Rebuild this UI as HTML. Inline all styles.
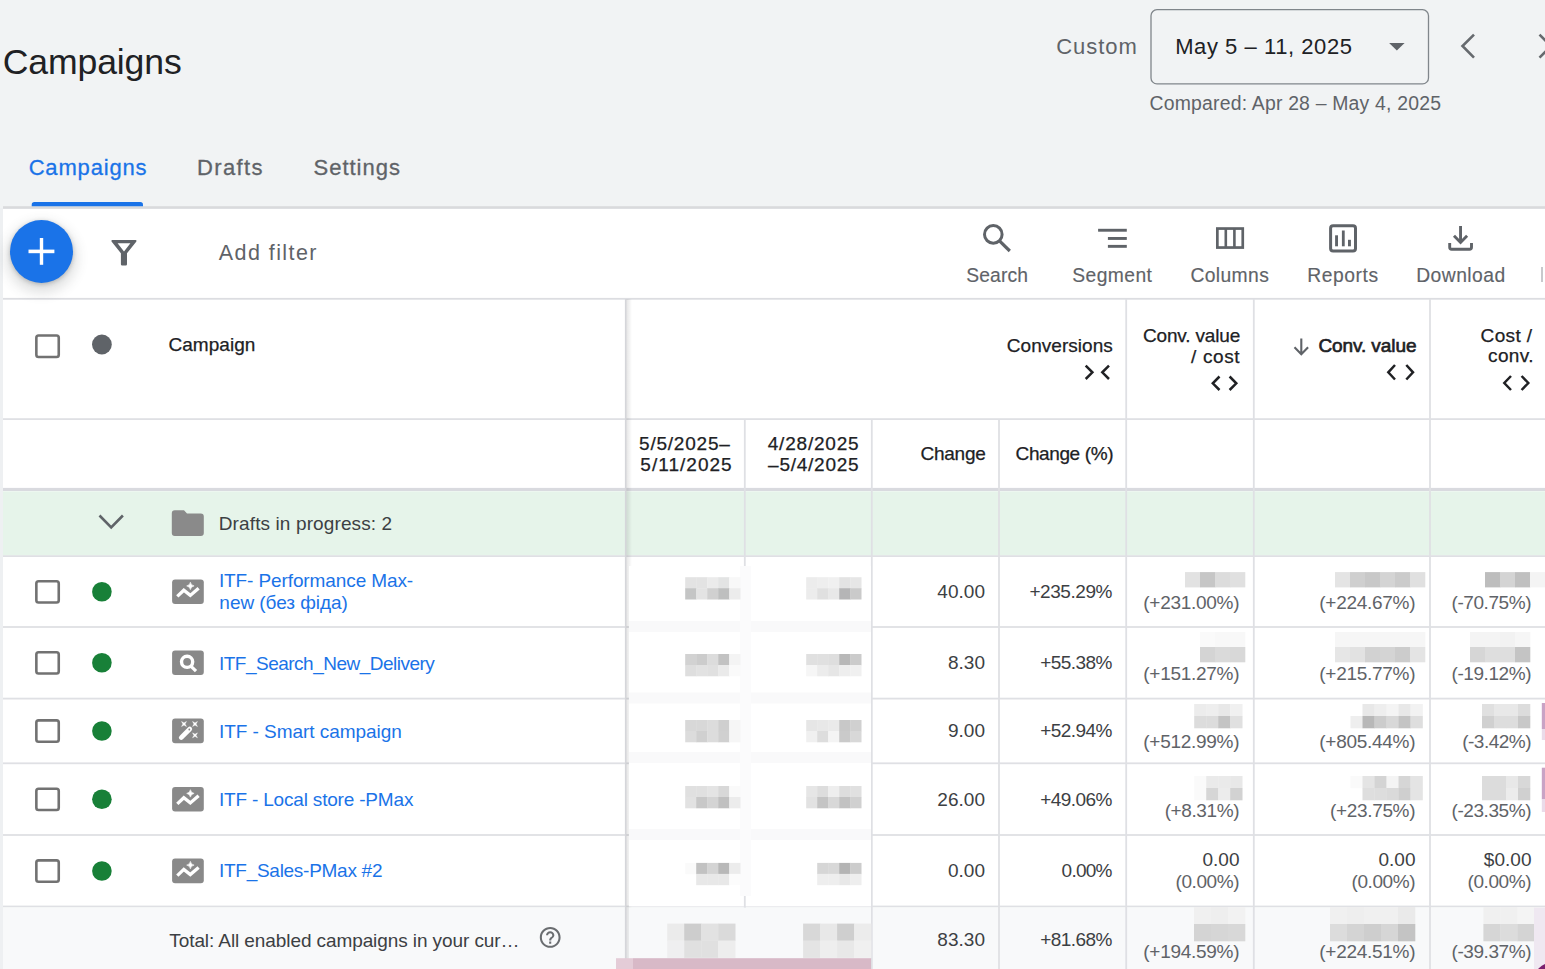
<!DOCTYPE html><html><head><meta charset="utf-8"><style>
html,body{margin:0;padding:0;}body{width:1545px;height:969px;position:relative;overflow:hidden;background:#f1f3f4;font-family:"Liberation Sans",sans-serif;}
.t{position:absolute;white-space:nowrap;line-height:1;}
svg{position:absolute;left:0;top:0;}
</style></head><body>
<svg width="1545" height="969" viewBox="0 0 1545 969"><rect x="0" y="0" width="1545" height="969" fill="#f1f3f4"/><rect x="3" y="208.8" width="1542" height="761" fill="#ffffff"/><rect x="3" y="206.2" width="1542" height="2.6" fill="#d9dadc"/><path d="M31.7 206.2 V204.7 a2.7 2.7 0 0 1 2.7 -2.7 H140.3 a2.7 2.7 0 0 1 2.7 2.7 V206.2 Z" fill="#1a73e8"/><rect x="1151" y="9.7" width="277.5" height="74.2" rx="6" fill="none" stroke="#80868b" stroke-width="1.3"/><path d="M1389.1 42.9 H1404.6 L1396.85 50.6 Z" fill="#5f6368"/><path d="M1474 34.6 L1462.5 46 L1474 57.6" fill="none" stroke="#666a6e" stroke-width="2.6"/><path d="M1539.5 34.6 L1551 46 L1539.5 57.6" fill="none" stroke="#666a6e" stroke-width="2.6"/><defs><filter id="sh" x="-50%" y="-50%" width="200%" height="200%"><feGaussianBlur in="SourceAlpha" stdDeviation="3.5"/><feOffset dy="3" result="b"/><feComponentTransfer><feFuncA type="linear" slope="0.28"/></feComponentTransfer><feMerge><feMergeNode/><feMergeNode in="SourceGraphic"/></feMerge></filter></defs><path fill-rule="evenodd" fill="#5f6368" d="M112.3 240 H135.6 Q137 240.3 136.2 241.8 L127 253.2 V264.2 Q127 265.4 125.8 265.4 H122.1 Q120.9 265.4 120.9 264.2 V253.2 L111.7 241.8 Q110.9 240.3 112.3 240 Z M117.6 243.2 H130.4 L124 251.6 Z"/><circle cx="993.3" cy="234.4" r="8.8" fill="none" stroke="#5f6368" stroke-width="3"/><path d="M999.5 240.8 L1009.8 251" stroke="#5f6368" stroke-width="3.2"/><rect x="1098.1" y="228.8" width="28.7" height="2.9" fill="#5f6368"/><rect x="1107.9" y="237" width="18.9" height="2.9" fill="#5f6368"/><rect x="1107.9" y="244.9" width="18.9" height="2.9" fill="#5f6368"/><rect x="1217.35" y="228.55" width="25.4" height="19" fill="none" stroke="#5f6368" stroke-width="2.7"/><rect x="1224.5" y="228" width="2.6" height="20" fill="#5f6368"/><rect x="1233.1" y="228" width="2.6" height="20" fill="#5f6368"/><rect x="1330.6" y="225.7" width="24.9" height="25.2" rx="2.5" fill="none" stroke="#5f6368" stroke-width="3"/><rect x="1335.1" y="235.3" width="2.9" height="11" fill="#5f6368"/><rect x="1341.9" y="230.5" width="2.8" height="15.8" fill="#5f6368"/><rect x="1348" y="239.8" width="2.9" height="6.5" fill="#5f6368"/><path d="M1460.55 225.9 V242.5 M1454 235.8 L1460.55 242.4 L1467.1 235.8" fill="none" stroke="#5f6368" stroke-width="2.9"/><path d="M1449.7 243.1 V247.2 a2 2 0 0 0 2 2 H1469.5 a2 2 0 0 0 2 -2 V243.1" fill="none" stroke="#5f6368" stroke-width="2.9"/><rect x="1541" y="267" width="2" height="15" fill="#c8c9cc"/><rect x="3" y="297.9" width="1542" height="1.8" fill="#dcdde1"/><defs><linearGradient id="vsh" x1="0" x2="1"><stop offset="0" stop-color="#000" stop-opacity="0.10"/><stop offset="1" stop-color="#000" stop-opacity="0"/></linearGradient></defs><rect x="36.35" y="335.5" width="22.4" height="21.5" rx="2.2" fill="none" stroke="#727272" stroke-width="2.6"/><circle cx="101.9" cy="344.5" r="9.9" fill="#5f6368"/><path d="M1085.7 365.6 L1092.4 372.3 L1085.7 379 M1109 365.6 L1102.3 372.3 L1109 379" fill="none" stroke="#202124" stroke-width="2.5"/><path d="M1219.5 376.5 L1212.8 383.3 L1219.5 390 M1229.6 376.5 L1236.3 383.3 L1229.6 390" fill="none" stroke="#202124" stroke-width="2.5"/><path d="M1301.3 338.6 V354 M1294.5 347.3 L1301.3 354.3 L1308.1 347.3" fill="none" stroke="#5f6368" stroke-width="2.1"/><path d="M1395 365 L1388.3 372.3 L1395 379.5 M1406.3 365 L1413 372.3 L1406.3 379.5" fill="none" stroke="#202124" stroke-width="2.5"/><path d="M1511 376 L1504.3 383 L1511 390 M1521.6 376 L1528.3 383 L1521.6 390" fill="none" stroke="#202124" stroke-width="2.5"/><rect x="3" y="418.2" width="1542" height="1.8" fill="#dfe0e4"/><rect x="3" y="491.3" width="1542" height="64" fill="#e6f4ea"/><rect x="3" y="487.9" width="1542" height="3.1" fill="#d9dadf"/><rect x="3" y="555.2" width="1542" height="1.8" fill="#dfe0e4"/><path d="M99.5 515.5 L111.2 527.3 L122.9 515.5" fill="none" stroke="#5f6368" stroke-width="2.6"/><path d="M174.8 510.3 H184 L187 513.5 H200.8 a3 3 0 0 1 3 3 V533 a3 3 0 0 1 -3 3 H174.8 a3 3 0 0 1 -3 -3 V513.3 a3 3 0 0 1 3 -3 Z" fill="#8a8a8a"/><rect x="3" y="626.1" width="1542" height="1.8" fill="#dfe0e4"/><rect x="3" y="697.7" width="1542" height="1.8" fill="#dfe0e4"/><rect x="3" y="762.4" width="1542" height="1.8" fill="#dfe0e4"/><rect x="3" y="834.1" width="1542" height="1.8" fill="#dfe0e4"/><rect x="3" y="905.6" width="1542" height="1.8" fill="#dfe0e4"/><rect x="3" y="907.6" width="1542" height="62" fill="#f8f9fa"/><rect x="36.35" y="581.1999999999999" width="22.4" height="21.3" rx="2.2" fill="none" stroke="#727272" stroke-width="2.6"/><circle cx="101.9" cy="591.8" r="9.8" fill="#188038"/><rect x="172.1" y="579.4" width="31.7" height="24.7" rx="3" fill="#898989"/><path d="M177.3 596.4 L183.8 590.1999999999999 L190.3 595.4 L198.6 588.1999999999999" fill="none" stroke="#fff" stroke-width="3.3"/><path d="M190.4 582.1999999999999 Q190.9775 585.3225 194.1 585.9 Q190.9775 586.4775 190.4 589.6 Q189.82250000000002 586.4775 186.70000000000002 585.9 Q189.82250000000002 585.3225 190.4 582.1999999999999 Z" fill="#fff" stroke="#fff" stroke-width="0.6" stroke-linejoin="round"/><rect x="36.35" y="652.1999999999999" width="22.4" height="21.3" rx="2.2" fill="none" stroke="#727272" stroke-width="2.6"/><circle cx="101.9" cy="662.8" r="9.8" fill="#188038"/><rect x="172.1" y="650.4" width="31.7" height="24.7" rx="3" fill="#898989"/><circle cx="187.1" cy="661.8" r="5.6" fill="none" stroke="#fff" stroke-width="3.4"/><path d="M190.6 665.8 L196 671.1999999999999" stroke="#fff" stroke-width="3.2"/><rect x="36.35" y="720.4" width="22.4" height="21.3" rx="2.2" fill="none" stroke="#727272" stroke-width="2.6"/><circle cx="101.9" cy="731" r="9.8" fill="#188038"/><rect x="172.1" y="718.6" width="31.7" height="24.7" rx="3" fill="#898989"/><path d="M181.2 737.6 L189.8 729" stroke="#fff" stroke-width="4.6" stroke-linecap="round" stroke-linejoin="round"/><circle cx="189.3" cy="729.5" r="0.9" fill="#898989"/><path d="M181.6 721.6 L184 723.0 L186.4 721.6 L185.0 724 L186.4 726.4 L184 725.0 L181.6 726.4 L183.0 724 Z" fill="#fff" stroke="#fff" stroke-width="0.5" stroke-linejoin="round"/><path d="M192.6 721.6 L195 723.0 L197.4 721.6 L196.0 724 L197.4 726.4 L195 725.0 L192.6 726.4 L194.0 724 Z" fill="#fff" stroke="#fff" stroke-width="0.5" stroke-linejoin="round"/><path d="M192.6 732.9 L195 734.3 L197.4 732.9 L196.0 735.3 L197.4 737.6999999999999 L195 736.3 L192.6 737.6999999999999 L194.0 735.3 Z" fill="#fff" stroke="#fff" stroke-width="0.5" stroke-linejoin="round"/><rect x="36.35" y="788.6999999999999" width="22.4" height="21.3" rx="2.2" fill="none" stroke="#727272" stroke-width="2.6"/><circle cx="101.9" cy="799.3" r="9.8" fill="#188038"/><rect x="172.1" y="786.9" width="31.7" height="24.7" rx="3" fill="#898989"/><path d="M177.3 803.9 L183.8 797.6999999999999 L190.3 802.9 L198.6 795.6999999999999" fill="none" stroke="#fff" stroke-width="3.3"/><path d="M190.4 789.6999999999999 Q190.9775 792.8225 194.1 793.4 Q190.9775 793.9775 190.4 797.1 Q189.82250000000002 793.9775 186.70000000000002 793.4 Q189.82250000000002 792.8225 190.4 789.6999999999999 Z" fill="#fff" stroke="#fff" stroke-width="0.6" stroke-linejoin="round"/><rect x="36.35" y="860.4" width="22.4" height="21.3" rx="2.2" fill="none" stroke="#727272" stroke-width="2.6"/><circle cx="101.9" cy="871" r="9.8" fill="#188038"/><rect x="172.1" y="858.6" width="31.7" height="24.7" rx="3" fill="#898989"/><path d="M177.3 875.6 L183.8 869.4 L190.3 874.6 L198.6 867.4" fill="none" stroke="#fff" stroke-width="3.3"/><path d="M190.4 861.4 Q190.9775 864.5225 194.1 865.1 Q190.9775 865.6775 190.4 868.8000000000001 Q189.82250000000002 865.6775 186.70000000000002 865.1 Q189.82250000000002 864.5225 190.4 861.4 Z" fill="#fff" stroke="#fff" stroke-width="0.6" stroke-linejoin="round"/><path transform="translate(537.720 924.920) scale(1.04)" fill="#6a6d70" d="M11 18h2v-2h-2v2zm1-16C6.480 2 2 6.480 2 12s4.480 10 10 10 10-4.480 10-10S17.520 2 12 2zm0 18c-4.410 0-8-3.590-8-8s3.590-8 8-8 8 3.590 8 8-3.590 8-8 8zm0-14c-2.210 0-4 1.790-4 4h2c0-1.100.9-2 2-2s2 .9 2 2c0 2-3 1.750-3 5h2c0-2.250 3-2.500 3-5 0-2.210-1.790-4-4-4z"/><rect x="743.9" y="419" width="1.8" height="550" fill="#dfe0e4"/><rect x="870.9" y="419" width="1.8" height="550" fill="#dfe0e4"/><rect x="998.1" y="419" width="1.8" height="550" fill="#dfe0e4"/><rect x="1125.3" y="299" width="1.8" height="670" fill="#dfe0e4"/><rect x="1252.9" y="299" width="1.8" height="670" fill="#dfe0e4"/><rect x="1429.1" y="299" width="1.8" height="670" fill="#dfe0e4"/><rect x="624.9" y="299" width="1.6" height="670" fill="#d5d6da"/><rect x="626.5" y="299" width="5.5" height="670" fill="url(#vsh)"/><rect x="629" y="566" width="242" height="340.4" fill="#ffffff"/><rect x="629" y="621" width="242" height="11" fill="#f9f9fa"/><rect x="629" y="692.5" width="242" height="11" fill="#f9f9fa"/><rect x="629" y="752" width="242" height="11" fill="#f9f9fa"/><rect x="629" y="829" width="242" height="11" fill="#f9f9fa"/><rect x="740" y="566" width="11" height="330" fill="#fbfbfc"/><rect x="743.9" y="896" width="1.8" height="30" fill="#dfe0e4"/><rect x="629" y="907.6" width="242" height="62" fill="#f8f9fa"/><rect x="685.2" y="577.2" width="11.3" height="11.3" fill="#e3e3e3"/><rect x="696.2" y="577.2" width="11.3" height="11.3" fill="#e3e3e3"/><rect x="707.2" y="577.2" width="11.3" height="11.3" fill="#ebebeb"/><rect x="718.2" y="577.2" width="11.3" height="11.3" fill="#e3e4e4"/><rect x="729.2" y="577.2" width="11.3" height="11.3" fill="#f8f8f8"/><rect x="685.2" y="588.2" width="11.3" height="11.3" fill="#c4c5c5"/><rect x="696.2" y="588.2" width="11.3" height="11.3" fill="#e3e3e3"/><rect x="707.2" y="588.2" width="11.3" height="11.3" fill="#d0d0d0"/><rect x="718.2" y="588.2" width="11.3" height="11.3" fill="#bebfbf"/><rect x="729.2" y="588.2" width="11.3" height="11.3" fill="#ececec"/><rect x="806.2" y="577.2" width="11.3" height="11.3" fill="#ececec"/><rect x="817.2" y="577.2" width="11.3" height="11.3" fill="#eeeeee"/><rect x="828.2" y="577.2" width="11.3" height="11.3" fill="#f0f0f0"/><rect x="839.2" y="577.2" width="11.3" height="11.3" fill="#e3e3e3"/><rect x="850.2" y="577.2" width="11.3" height="11.3" fill="#e6e6e6"/><rect x="806.2" y="588.2" width="11.3" height="11.3" fill="#ececec"/><rect x="817.2" y="588.2" width="11.3" height="11.3" fill="#e0e0e0"/><rect x="828.2" y="588.2" width="11.3" height="11.3" fill="#e8e8e8"/><rect x="839.2" y="588.2" width="11.3" height="11.3" fill="#b5b5b6"/><rect x="850.2" y="588.2" width="11.3" height="11.3" fill="#cacaca"/><rect x="685.2" y="654" width="11.3" height="11.3" fill="#d2d2d2"/><rect x="696.2" y="654" width="11.3" height="11.3" fill="#cccccc"/><rect x="707.2" y="654" width="11.3" height="11.3" fill="#dcdcdc"/><rect x="718.2" y="654" width="11.3" height="11.3" fill="#c2c2c2"/><rect x="729.2" y="654" width="11.3" height="11.3" fill="#f4f4f4"/><rect x="685.2" y="665" width="11.3" height="11.3" fill="#dedede"/><rect x="696.2" y="665" width="11.3" height="11.3" fill="#e2e2e2"/><rect x="707.2" y="665" width="11.3" height="11.3" fill="#e0e0e0"/><rect x="718.2" y="665" width="11.3" height="11.3" fill="#eaeaea"/><rect x="729.2" y="665" width="11.3" height="11.3" fill="#fafafa"/><rect x="806.2" y="654" width="11.3" height="11.3" fill="#e0e0e0"/><rect x="817.2" y="654" width="11.3" height="11.3" fill="#e0e0e0"/><rect x="828.2" y="654" width="11.3" height="11.3" fill="#dedede"/><rect x="839.2" y="654" width="11.3" height="11.3" fill="#b8b8b8"/><rect x="850.2" y="654" width="11.3" height="11.3" fill="#cbcbcb"/><rect x="806.2" y="665" width="11.3" height="11.3" fill="#f6f6f6"/><rect x="817.2" y="665" width="11.3" height="11.3" fill="#ececec"/><rect x="828.2" y="665" width="11.3" height="11.3" fill="#e6e6e6"/><rect x="839.2" y="665" width="11.3" height="11.3" fill="#eeeeee"/><rect x="850.2" y="665" width="11.3" height="11.3" fill="#f0f0f0"/><rect x="685.2" y="720" width="11.3" height="11.3" fill="#d8d8d8"/><rect x="696.2" y="720" width="11.3" height="11.3" fill="#d8d8d8"/><rect x="707.2" y="720" width="11.3" height="11.3" fill="#dcdcdc"/><rect x="718.2" y="720" width="11.3" height="11.3" fill="#cfcfcf"/><rect x="729.2" y="720" width="11.3" height="11.3" fill="#f6f6f6"/><rect x="685.2" y="731" width="11.3" height="11.3" fill="#dcdcdc"/><rect x="696.2" y="731" width="11.3" height="11.3" fill="#d0d0d0"/><rect x="707.2" y="731" width="11.3" height="11.3" fill="#dcdcdc"/><rect x="718.2" y="731" width="11.3" height="11.3" fill="#d0d0d0"/><rect x="729.2" y="731" width="11.3" height="11.3" fill="#f6f6f6"/><rect x="806.2" y="720" width="11.3" height="11.3" fill="#e6e6e6"/><rect x="817.2" y="720" width="11.3" height="11.3" fill="#e8e8e8"/><rect x="828.2" y="720" width="11.3" height="11.3" fill="#eaeaea"/><rect x="839.2" y="720" width="11.3" height="11.3" fill="#c8c8c8"/><rect x="850.2" y="720" width="11.3" height="11.3" fill="#d0d0d0"/><rect x="806.2" y="731" width="11.3" height="11.3" fill="#f0f0f0"/><rect x="817.2" y="731" width="11.3" height="11.3" fill="#dddddd"/><rect x="828.2" y="731" width="11.3" height="11.3" fill="#f4f4f4"/><rect x="839.2" y="731" width="11.3" height="11.3" fill="#cacaca"/><rect x="850.2" y="731" width="11.3" height="11.3" fill="#d8d8d8"/><rect x="685.2" y="786" width="11.3" height="11.3" fill="#e0e0e0"/><rect x="696.2" y="786" width="11.3" height="11.3" fill="#e0e0e0"/><rect x="707.2" y="786" width="11.3" height="11.3" fill="#e4e4e4"/><rect x="718.2" y="786" width="11.3" height="11.3" fill="#d8d8d8"/><rect x="729.2" y="786" width="11.3" height="11.3" fill="#fafafa"/><rect x="685.2" y="797" width="11.3" height="11.3" fill="#e2e2e2"/><rect x="696.2" y="797" width="11.3" height="11.3" fill="#c8c8c8"/><rect x="707.2" y="797" width="11.3" height="11.3" fill="#d4d4d4"/><rect x="718.2" y="797" width="11.3" height="11.3" fill="#c0c0c0"/><rect x="729.2" y="797" width="11.3" height="11.3" fill="#ececec"/><rect x="806.2" y="786" width="11.3" height="11.3" fill="#e6e6e6"/><rect x="817.2" y="786" width="11.3" height="11.3" fill="#dddddd"/><rect x="828.2" y="786" width="11.3" height="11.3" fill="#eeeeee"/><rect x="839.2" y="786" width="11.3" height="11.3" fill="#dddddd"/><rect x="850.2" y="786" width="11.3" height="11.3" fill="#e0e0e0"/><rect x="806.2" y="797" width="11.3" height="11.3" fill="#e2e2e2"/><rect x="817.2" y="797" width="11.3" height="11.3" fill="#c4c4c4"/><rect x="828.2" y="797" width="11.3" height="11.3" fill="#d8d8d8"/><rect x="839.2" y="797" width="11.3" height="11.3" fill="#c2c2c2"/><rect x="850.2" y="797" width="11.3" height="11.3" fill="#d0d0d0"/><rect x="685.2" y="862.9" width="11.3" height="11.3" fill="#fafafa"/><rect x="696.2" y="862.9" width="11.3" height="11.3" fill="#c2c2c2"/><rect x="707.2" y="862.9" width="11.3" height="11.3" fill="#d4d4d4"/><rect x="718.2" y="862.9" width="11.3" height="11.3" fill="#b8b8b8"/><rect x="729.2" y="862.9" width="11.3" height="11.3" fill="#ececec"/><rect x="696.2" y="873.9" width="11.3" height="11.3" fill="#e8e8e8"/><rect x="707.2" y="873.9" width="11.3" height="11.3" fill="#e8e8e8"/><rect x="718.2" y="873.9" width="11.3" height="11.3" fill="#e8e8e8"/><rect x="729.2" y="873.9" width="11.3" height="11.3" fill="#fcfcfc"/><rect x="817.2" y="862.9" width="11.3" height="11.3" fill="#d6d6d6"/><rect x="828.2" y="862.9" width="11.3" height="11.3" fill="#d8d8d8"/><rect x="839.2" y="862.9" width="11.3" height="11.3" fill="#b4b4b4"/><rect x="850.2" y="862.9" width="11.3" height="11.3" fill="#cccccc"/><rect x="817.2" y="873.9" width="11.3" height="11.3" fill="#eeeeee"/><rect x="828.2" y="873.9" width="11.3" height="11.3" fill="#eeeeee"/><rect x="839.2" y="873.9" width="11.3" height="11.3" fill="#e8e8e8"/><rect x="850.2" y="873.9" width="11.3" height="11.3" fill="#eeeeee"/><rect x="667.2" y="923.6" width="17.3" height="17.3" fill="#ebebeb"/><rect x="684.2" y="923.6" width="17.3" height="17.3" fill="#cdcdcd"/><rect x="701.2" y="923.6" width="17.3" height="17.3" fill="#e2e2e2"/><rect x="718.2" y="923.6" width="17.3" height="17.3" fill="#dadada"/><rect x="667.2" y="940.6" width="17.3" height="17.3" fill="#efeff0"/><rect x="684.2" y="940.6" width="17.3" height="17.3" fill="#e0e0e0"/><rect x="701.2" y="940.6" width="17.3" height="17.3" fill="#e0e0e0"/><rect x="718.2" y="940.6" width="17.3" height="17.3" fill="#ededed"/><rect x="803.1" y="923.6" width="17.3" height="17.3" fill="#d8d8d8"/><rect x="820.1" y="923.6" width="17.3" height="17.3" fill="#e8e8e8"/><rect x="837.1" y="923.6" width="17.3" height="17.3" fill="#cfcfcf"/><rect x="854.1" y="923.6" width="17.3" height="17.3" fill="#ececec"/><rect x="803.1" y="940.6" width="17.3" height="17.3" fill="#e4e4e4"/><rect x="820.1" y="940.6" width="17.3" height="17.3" fill="#eeeeee"/><rect x="837.1" y="940.6" width="17.3" height="17.3" fill="#e8e8e8"/><rect x="854.1" y="940.6" width="17.3" height="17.3" fill="#f0f0f0"/><rect x="1185" y="572.1" width="15.3" height="15.3" fill="#e2e2e2"/><rect x="1200" y="572.1" width="15.3" height="15.3" fill="#c6c6c6"/><rect x="1215" y="572.1" width="15.3" height="15.3" fill="#dcdcdc"/><rect x="1230" y="572.1" width="15.3" height="15.3" fill="#e0e0e0"/><rect x="1335" y="572.1" width="15.3" height="15.3" fill="#e4e4e4"/><rect x="1350" y="572.1" width="15.3" height="15.3" fill="#cfcfcf"/><rect x="1365" y="572.1" width="15.3" height="15.3" fill="#c8c8c8"/><rect x="1380" y="572.1" width="15.3" height="15.3" fill="#d4d4d4"/><rect x="1395" y="572.1" width="15.3" height="15.3" fill="#cbcbcb"/><rect x="1410" y="572.1" width="15.3" height="15.3" fill="#e0e0e0"/><rect x="1485" y="572.1" width="15.3" height="15.3" fill="#bdbdbd"/><rect x="1500" y="572.1" width="15.3" height="15.3" fill="#d4d4d4"/><rect x="1515" y="572.1" width="15.3" height="15.3" fill="#c0c0c0"/><rect x="1530" y="572.1" width="15.3" height="15.3" fill="#f4f4f4"/><rect x="1200" y="632" width="15.3" height="15.3" fill="#fafafa"/><rect x="1215" y="632" width="15.3" height="15.3" fill="#f8f8f8"/><rect x="1230" y="632" width="15.3" height="15.3" fill="#f8f8f8"/><rect x="1200" y="647" width="15.3" height="15.3" fill="#d4d4d4"/><rect x="1215" y="647" width="15.3" height="15.3" fill="#dadada"/><rect x="1230" y="647" width="15.3" height="15.3" fill="#d8d8d8"/><rect x="1335" y="632" width="15.3" height="15.3" fill="#f6f6f6"/><rect x="1350" y="632" width="15.3" height="15.3" fill="#f6f6f6"/><rect x="1365" y="632" width="15.3" height="15.3" fill="#f6f6f6"/><rect x="1380" y="632" width="15.3" height="15.3" fill="#f6f6f6"/><rect x="1395" y="632" width="15.3" height="15.3" fill="#f6f6f6"/><rect x="1410" y="632" width="15.3" height="15.3" fill="#f6f6f6"/><rect x="1335" y="647" width="15.3" height="15.3" fill="#e6e6e6"/><rect x="1350" y="647" width="15.3" height="15.3" fill="#e2e2e2"/><rect x="1365" y="647" width="15.3" height="15.3" fill="#d2d2d2"/><rect x="1380" y="647" width="15.3" height="15.3" fill="#d4d4d4"/><rect x="1395" y="647" width="15.3" height="15.3" fill="#cccccc"/><rect x="1410" y="647" width="15.3" height="15.3" fill="#e4e4e4"/><rect x="1470" y="632" width="15.3" height="15.3" fill="#f4f4f4"/><rect x="1485" y="632" width="15.3" height="15.3" fill="#f4f4f4"/><rect x="1500" y="632" width="15.3" height="15.3" fill="#f2f2f2"/><rect x="1515" y="632" width="15.3" height="15.3" fill="#f6f6f6"/><rect x="1470" y="647" width="15.3" height="15.3" fill="#d6d6d6"/><rect x="1485" y="647" width="15.3" height="15.3" fill="#dedede"/><rect x="1500" y="647" width="15.3" height="15.3" fill="#dedede"/><rect x="1515" y="647" width="15.3" height="15.3" fill="#c4c4c4"/><rect x="1194.2" y="704" width="12.3" height="12.3" fill="#ececec"/><rect x="1206.2" y="704" width="12.3" height="12.3" fill="#eeeeee"/><rect x="1218.2" y="704" width="12.3" height="12.3" fill="#e8e8e8"/><rect x="1230.2" y="704" width="12.3" height="12.3" fill="#f0f0f0"/><rect x="1194.2" y="716" width="12.3" height="12.3" fill="#dcdcdc"/><rect x="1206.2" y="716" width="12.3" height="12.3" fill="#dcdcdc"/><rect x="1218.2" y="716" width="12.3" height="12.3" fill="#c4c4c4"/><rect x="1230.2" y="716" width="12.3" height="12.3" fill="#e0e0e0"/><rect x="1362.5" y="704" width="12.3" height="12.3" fill="#e8e8e8"/><rect x="1374.5" y="704" width="12.3" height="12.3" fill="#eeeeee"/><rect x="1386.5" y="704" width="12.3" height="12.3" fill="#f4f4f4"/><rect x="1398.5" y="704" width="12.3" height="12.3" fill="#e8e8e8"/><rect x="1410.5" y="704" width="12.3" height="12.3" fill="#f2f2f2"/><rect x="1350.5" y="716" width="12.3" height="12.3" fill="#eeeeee"/><rect x="1362.5" y="716" width="12.3" height="12.3" fill="#b8b8b8"/><rect x="1374.5" y="716" width="12.3" height="12.3" fill="#cccccc"/><rect x="1386.5" y="716" width="12.3" height="12.3" fill="#d8d8d8"/><rect x="1398.5" y="716" width="12.3" height="12.3" fill="#c4c4c4"/><rect x="1410.5" y="716" width="12.3" height="12.3" fill="#dedede"/><rect x="1482" y="704" width="12.3" height="12.3" fill="#e0e0e0"/><rect x="1494" y="704" width="12.3" height="12.3" fill="#e8e8e8"/><rect x="1506" y="704" width="12.3" height="12.3" fill="#e8e8e8"/><rect x="1518" y="704" width="12.3" height="12.3" fill="#dcdcdc"/><rect x="1482" y="716" width="12.3" height="12.3" fill="#d0d0d0"/><rect x="1494" y="716" width="12.3" height="12.3" fill="#dddddd"/><rect x="1506" y="716" width="12.3" height="12.3" fill="#dddddd"/><rect x="1518" y="716" width="12.3" height="12.3" fill="#c8c8c8"/><rect x="1194.2" y="776" width="12.3" height="12.3" fill="#fafafa"/><rect x="1206.2" y="776" width="12.3" height="12.3" fill="#eaeaea"/><rect x="1218.2" y="776" width="12.3" height="12.3" fill="#eaeaea"/><rect x="1230.2" y="776" width="12.3" height="12.3" fill="#e8e8e8"/><rect x="1194.2" y="788" width="12.3" height="12.3" fill="#fafafa"/><rect x="1206.2" y="788" width="12.3" height="12.3" fill="#d6d6d6"/><rect x="1218.2" y="788" width="12.3" height="12.3" fill="#ececec"/><rect x="1230.2" y="788" width="12.3" height="12.3" fill="#d2d2d2"/><rect x="1350.5" y="776" width="12.3" height="12.3" fill="#fafafa"/><rect x="1362.5" y="776" width="12.3" height="12.3" fill="#e4e4e4"/><rect x="1374.5" y="776" width="12.3" height="12.3" fill="#d4d4d4"/><rect x="1386.5" y="776" width="12.3" height="12.3" fill="#f4f4f4"/><rect x="1398.5" y="776" width="12.3" height="12.3" fill="#d6d6d6"/><rect x="1410.5" y="776" width="12.3" height="12.3" fill="#e4e4e4"/><rect x="1362.5" y="788" width="12.3" height="12.3" fill="#dedede"/><rect x="1374.5" y="788" width="12.3" height="12.3" fill="#dddddd"/><rect x="1386.5" y="788" width="12.3" height="12.3" fill="#dadada"/><rect x="1398.5" y="788" width="12.3" height="12.3" fill="#cfcfcf"/><rect x="1410.5" y="788" width="12.3" height="12.3" fill="#e4e4e4"/><rect x="1482" y="776" width="12.3" height="12.3" fill="#dcdcdc"/><rect x="1494" y="776" width="12.3" height="12.3" fill="#dcdcdc"/><rect x="1506" y="776" width="12.3" height="12.3" fill="#e8e8e8"/><rect x="1518" y="776" width="12.3" height="12.3" fill="#d8d8d8"/><rect x="1482" y="788" width="12.3" height="12.3" fill="#dcdcdc"/><rect x="1494" y="788" width="12.3" height="12.3" fill="#dcdcdc"/><rect x="1506" y="788" width="12.3" height="12.3" fill="#ececec"/><rect x="1518" y="788" width="12.3" height="12.3" fill="#d0d0d0"/><rect x="1194" y="907" width="17.3" height="17.3" fill="#f0f0f0"/><rect x="1211" y="907" width="17.3" height="17.3" fill="#eeeeee"/><rect x="1228" y="907" width="17.3" height="17.3" fill="#f2f2f2"/><rect x="1194" y="924" width="17.3" height="17.3" fill="#d4d4d4"/><rect x="1211" y="924" width="17.3" height="17.3" fill="#d6d6d6"/><rect x="1228" y="924" width="17.3" height="17.3" fill="#d8d8d8"/><rect x="1330" y="907" width="17.3" height="17.3" fill="#f0f0f0"/><rect x="1347" y="907" width="17.3" height="17.3" fill="#eeeeee"/><rect x="1364" y="907" width="17.3" height="17.3" fill="#f0f0f0"/><rect x="1381" y="907" width="17.3" height="17.3" fill="#f0f0f0"/><rect x="1398" y="907" width="17.3" height="17.3" fill="#eaeaea"/><rect x="1330" y="924" width="17.3" height="17.3" fill="#dcdcdc"/><rect x="1347" y="924" width="17.3" height="17.3" fill="#d4d4d4"/><rect x="1364" y="924" width="17.3" height="17.3" fill="#cecece"/><rect x="1381" y="924" width="17.3" height="17.3" fill="#d6d6d6"/><rect x="1398" y="924" width="17.3" height="17.3" fill="#c4c4c4"/><rect x="1483.4" y="907" width="17.3" height="17.3" fill="#f0f0f0"/><rect x="1500.4" y="907" width="17.3" height="17.3" fill="#f0f0f0"/><rect x="1517.4" y="907" width="17.3" height="17.3" fill="#f4f4f4"/><rect x="1483.4" y="924" width="17.3" height="17.3" fill="#d6d6d6"/><rect x="1500.4" y="924" width="17.3" height="17.3" fill="#dcdcdc"/><rect x="1517.4" y="924" width="17.3" height="17.3" fill="#d4d4d4"/><rect x="616" y="958.2" width="17" height="11" fill="#e4ccd7"/><rect x="633" y="958.2" width="238" height="11" fill="#d8b9c7"/><rect x="1541.8" y="703" width="3.2" height="26" fill="#c9a3c5"/><rect x="1541.8" y="729" width="3.2" height="11" fill="#eadbe9"/><rect x="1541.8" y="767.7" width="3.2" height="31.7" fill="#c9a3c5"/><rect x="1541.8" y="799.4" width="3.2" height="12.6" fill="#eadbe9"/><rect x="1534" y="907.6" width="11" height="62" fill="#efe8f1"/><path d="M1538 969 Q1542 965 1545 964 V969 Z" fill="#7a1f6e"/><rect x="0" y="208" width="3" height="761" fill="#eef0f2"/></svg>
<div style="position:absolute;left:9.6px;top:219.9px;width:63.6px;height:63.6px;border-radius:50%;background:#1a73e8;box-shadow:0 1.5px 4.5px rgba(60,64,67,0.30),0 6px 12px 4.5px rgba(60,64,67,0.15);"></div>
<svg style="position:absolute;left:0;top:0" width="100" height="300" viewBox="0 0 100 300"><rect x="28.5" y="249.6" width="25.9" height="3.6" fill="#fff"/><rect x="39.8" y="238" width="3.4" height="26.8" fill="#fff"/></svg>
<div class="t" style="top:44.56px;font-size:35.6px;color:#202124;letter-spacing:-0.118px;left:2.72px;">Campaigns</div>
<div class="t" style="top:156.88px;font-size:22px;color:#1a73e8;letter-spacing:0.836px;-webkit-text-stroke:0.3px #1a73e8;left:28.65px;">Campaigns</div>
<div class="t" style="top:156.88px;font-size:22px;color:#5f6368;letter-spacing:1.391px;-webkit-text-stroke:0.3px #5f6368;left:196.99px;">Drafts</div>
<div class="t" style="top:156.88px;font-size:22px;color:#5f6368;letter-spacing:0.981px;-webkit-text-stroke:0.3px #5f6368;left:313.56px;">Settings</div>
<div class="t" style="top:36.18px;font-size:22px;color:#5f6368;letter-spacing:0.958px;left:1056.20px;">Custom</div>
<div class="t" style="top:36.38px;font-size:22px;color:#202124;letter-spacing:0.553px;left:1175.24px;">May 5 – 11, 2025</div>
<div class="t" style="top:93.88px;font-size:19.4px;color:#5f6368;letter-spacing:0.201px;left:1149.53px;">Compared: Apr 28 – May 4, 2025</div>
<div class="t" style="top:242.60px;font-size:21.5px;color:#5f6368;letter-spacing:1.426px;left:218.80px;">Add filter</div>
<div class="t" style="top:266.16px;font-size:19.3px;color:#5f6368;letter-spacing:0.15px;-webkit-text-stroke:0.15px #5f6368;left:966.21px;">Search</div>
<div class="t" style="top:266.16px;font-size:19.3px;color:#5f6368;letter-spacing:0.421px;-webkit-text-stroke:0.15px #5f6368;left:1072.21px;">Segment</div>
<div class="t" style="top:266.16px;font-size:19.3px;color:#5f6368;letter-spacing:0.389px;-webkit-text-stroke:0.15px #5f6368;left:1190.41px;">Columns</div>
<div class="t" style="top:266.16px;font-size:19.3px;color:#5f6368;letter-spacing:0.532px;-webkit-text-stroke:0.15px #5f6368;left:1307.33px;">Reports</div>
<div class="t" style="top:266.16px;font-size:19.3px;color:#5f6368;letter-spacing:0.463px;-webkit-text-stroke:0.15px #5f6368;left:1416.23px;">Download</div>
<div class="t" style="top:335.32px;font-size:19px;color:#202124;letter-spacing:0.037px;-webkit-text-stroke:0.25px #202124;left:168.48px;">Campaign</div>
<div class="t" style="top:336.12px;font-size:19px;color:#202124;letter-spacing:0.046px;-webkit-text-stroke:0.25px #202124;left:1006.77px;">Conversions</div>
<div class="t" style="top:325.62px;font-size:19px;color:#202124;letter-spacing:-0.144px;-webkit-text-stroke:0.25px #202124;left:1142.88px;">Conv. value</div>
<div class="t" style="top:346.52px;font-size:19px;color:#202124;letter-spacing:0.62px;-webkit-text-stroke:0.25px #202124;left:1191.12px;">/ cost</div>
<div class="t" style="top:335.92px;font-size:19px;color:#202124;letter-spacing:-0.084px;-webkit-text-stroke:0.65px #202124;left:1318.38px;">Conv. value</div>
<div class="t" style="top:325.92px;font-size:19px;color:#202124;letter-spacing:0.367px;-webkit-text-stroke:0.25px #202124;left:1480.58px;">Cost /</div>
<div class="t" style="top:346.42px;font-size:19px;color:#202124;letter-spacing:0.369px;-webkit-text-stroke:0.25px #202124;left:1488.07px;">conv.</div>
<div class="t" style="top:433.72px;font-size:19px;color:#202124;letter-spacing:0.776px;-webkit-text-stroke:0.25px #202124;left:639.07px;">5/5/2025–</div>
<div class="t" style="top:454.92px;font-size:19px;color:#202124;letter-spacing:1.022px;-webkit-text-stroke:0.25px #202124;left:640.37px;">5/11/2025</div>
<div class="t" style="top:433.72px;font-size:19px;color:#202124;letter-spacing:0.798px;-webkit-text-stroke:0.25px #202124;left:767.75px;">4/28/2025</div>
<div class="t" style="top:454.92px;font-size:19px;color:#202124;letter-spacing:0.751px;-webkit-text-stroke:0.25px #202124;left:768.12px;">–5/4/2025</div>
<div class="t" style="top:444.42px;font-size:19px;color:#202124;letter-spacing:-0.235px;-webkit-text-stroke:0.25px #202124;left:920.47px;">Change</div>
<div class="t" style="top:444.42px;font-size:19px;color:#202124;letter-spacing:-0.387px;-webkit-text-stroke:0.25px #202124;left:1015.57px;">Change (%)</div>
<div class="t" style="top:513.92px;font-size:19px;color:#3c4043;letter-spacing:0.117px;left:218.78px;">Drafts in progress: 2</div>
<div class="t" style="top:570.92px;font-size:19px;color:#1a73e8;letter-spacing:-0.102px;left:218.89px;">ITF- Performance Max-</div>
<div class="t" style="top:592.62px;font-size:19px;color:#1a73e8;letter-spacing:-0.044px;left:219.36px;">new (без фіда)</div>
<div class="t" style="top:653.52px;font-size:19px;color:#1a73e8;letter-spacing:-0.51px;left:218.99px;">ITF_Search_New_Delivery</div>
<div class="t" style="top:721.52px;font-size:19px;color:#1a73e8;letter-spacing:-0.049px;left:218.99px;">ITF - Smart campaign</div>
<div class="t" style="top:789.82px;font-size:19px;color:#1a73e8;letter-spacing:-0.186px;left:218.99px;">ITF - Local store -PMax</div>
<div class="t" style="top:860.62px;font-size:19px;color:#1a73e8;letter-spacing:-0.275px;left:218.99px;">ITF_Sales-PMax #2</div>
<div class="t" style="top:582.02px;font-size:19px;color:#3c4043;letter-spacing:0.033px;right:559.97px;text-align:right;">40.00</div>
<div class="t" style="top:582.02px;font-size:19px;color:#3c4043;letter-spacing:-0.436px;right:432.94px;text-align:right;">+235.29%</div>
<div class="t" style="top:593.02px;font-size:19px;color:#5f6368;letter-spacing:-0.288px;right:305.79px;text-align:right;">(+231.00%)</div>
<div class="t" style="top:593.02px;font-size:19px;color:#5f6368;letter-spacing:-0.288px;right:129.79px;text-align:right;">(+224.67%)</div>
<div class="t" style="top:593.02px;font-size:19px;color:#5f6368;letter-spacing:-0.435px;right:13.94px;text-align:right;">(-70.75%)</div>
<div class="t" style="top:653.02px;font-size:19px;color:#3c4043;letter-spacing:0.009px;right:559.99px;text-align:right;">8.30</div>
<div class="t" style="top:653.02px;font-size:19px;color:#3c4043;letter-spacing:-0.526px;right:433.03px;text-align:right;">+55.38%</div>
<div class="t" style="top:664.02px;font-size:19px;color:#5f6368;letter-spacing:-0.288px;right:305.79px;text-align:right;">(+151.27%)</div>
<div class="t" style="top:664.02px;font-size:19px;color:#5f6368;letter-spacing:-0.288px;right:129.79px;text-align:right;">(+215.77%)</div>
<div class="t" style="top:664.02px;font-size:19px;color:#5f6368;letter-spacing:-0.435px;right:13.94px;text-align:right;">(-19.12%)</div>
<div class="t" style="top:721.22px;font-size:19px;color:#3c4043;letter-spacing:0.009px;right:559.99px;text-align:right;">9.00</div>
<div class="t" style="top:721.22px;font-size:19px;color:#3c4043;letter-spacing:-0.526px;right:433.03px;text-align:right;">+52.94%</div>
<div class="t" style="top:732.22px;font-size:19px;color:#5f6368;letter-spacing:-0.288px;right:305.79px;text-align:right;">(+512.99%)</div>
<div class="t" style="top:732.22px;font-size:19px;color:#5f6368;letter-spacing:-0.288px;right:129.79px;text-align:right;">(+805.44%)</div>
<div class="t" style="top:732.22px;font-size:19px;color:#5f6368;letter-spacing:-0.512px;right:14.01px;text-align:right;">(-3.42%)</div>
<div class="t" style="top:789.52px;font-size:19px;color:#3c4043;letter-spacing:0.033px;right:559.97px;text-align:right;">26.00</div>
<div class="t" style="top:789.52px;font-size:19px;color:#3c4043;letter-spacing:-0.526px;right:433.03px;text-align:right;">+49.06%</div>
<div class="t" style="top:800.52px;font-size:19px;color:#5f6368;letter-spacing:-0.4px;right:305.90px;text-align:right;">(+8.31%)</div>
<div class="t" style="top:800.52px;font-size:19px;color:#5f6368;letter-spacing:-0.337px;right:129.84px;text-align:right;">(+23.75%)</div>
<div class="t" style="top:800.52px;font-size:19px;color:#5f6368;letter-spacing:-0.435px;right:13.94px;text-align:right;">(-23.35%)</div>
<div class="t" style="top:861.22px;font-size:19px;color:#3c4043;letter-spacing:0.009px;right:559.99px;text-align:right;">0.00</div>
<div class="t" style="top:861.22px;font-size:19px;color:#3c4043;letter-spacing:-0.739px;right:433.24px;text-align:right;">0.00%</div>
<div class="t" style="top:849.92px;font-size:19px;color:#3c4043;letter-spacing:0.009px;right:305.49px;text-align:right;">0.00</div>
<div class="t" style="top:872.42px;font-size:19px;color:#5f6368;letter-spacing:-0.416px;right:305.92px;text-align:right;">(0.00%)</div>
<div class="t" style="top:849.92px;font-size:19px;color:#3c4043;letter-spacing:0.009px;right:129.49px;text-align:right;">0.00</div>
<div class="t" style="top:872.42px;font-size:19px;color:#5f6368;letter-spacing:-0.416px;right:129.92px;text-align:right;">(0.00%)</div>
<div class="t" style="top:849.92px;font-size:19px;color:#3c4043;letter-spacing:0.033px;right:13.47px;text-align:right;">$0.00</div>
<div class="t" style="top:872.42px;font-size:19px;color:#5f6368;letter-spacing:-0.416px;right:13.92px;text-align:right;">(0.00%)</div>
<div class="t" style="top:930.52px;font-size:19px;color:#3c4043;letter-spacing:-0.09px;left:169.32px;">Total: All enabled campaigns in your cur…</div>
<div class="t" style="top:930.42px;font-size:19px;color:#3c4043;letter-spacing:0.033px;right:559.97px;text-align:right;">83.30</div>
<div class="t" style="top:930.42px;font-size:19px;color:#3c4043;letter-spacing:-0.526px;right:433.03px;text-align:right;">+81.68%</div>
<div class="t" style="top:941.92px;font-size:19px;color:#5f6368;letter-spacing:-0.288px;right:305.79px;text-align:right;">(+194.59%)</div>
<div class="t" style="top:941.92px;font-size:19px;color:#5f6368;letter-spacing:-0.288px;right:129.79px;text-align:right;">(+224.51%)</div>
<div class="t" style="top:941.92px;font-size:19px;color:#5f6368;letter-spacing:-0.435px;right:13.94px;text-align:right;">(-39.37%)</div>
</body></html>
